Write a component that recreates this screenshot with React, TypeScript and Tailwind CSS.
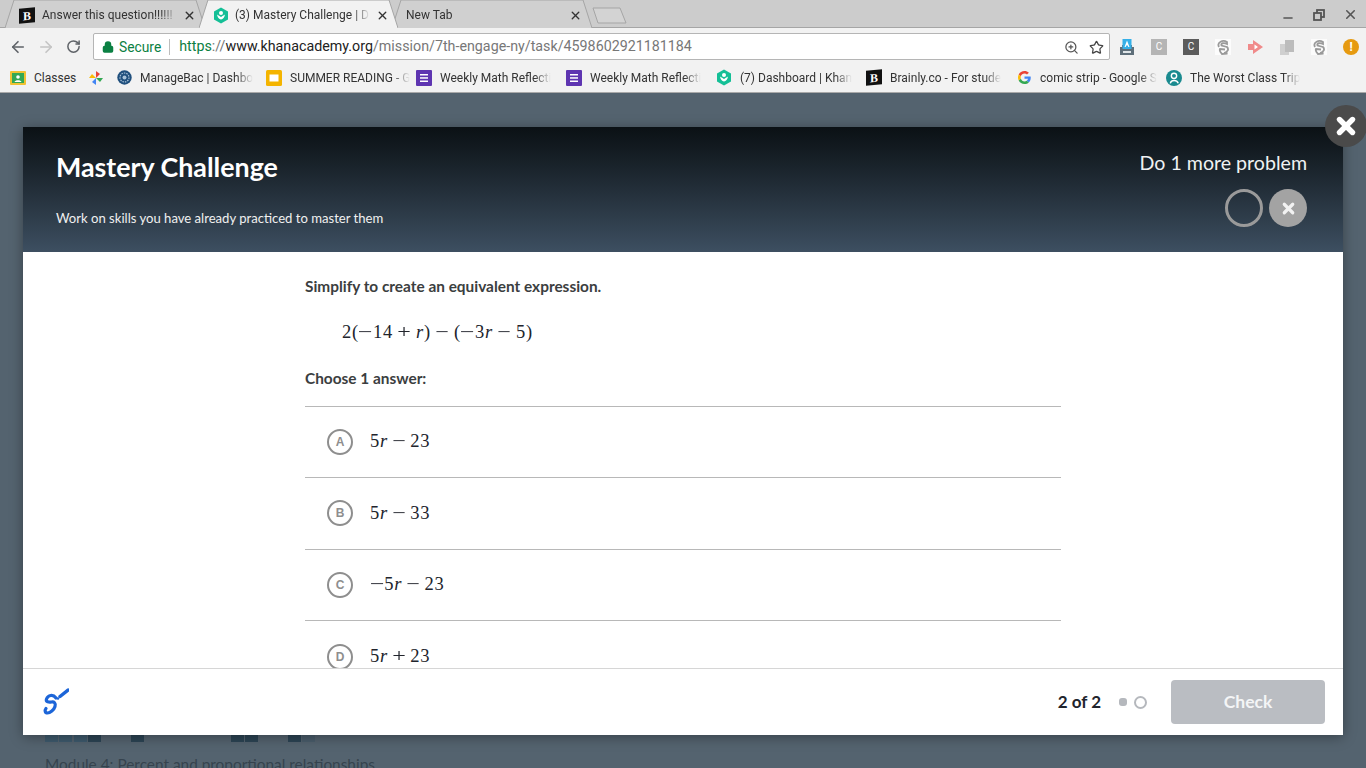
import React from "react";
import { ArrowLeft, ArrowRight, RotateCw, Lock, ZoomIn, Star, X, Minus } from "lucide-react";

const BrainlyIcon = () => (
  <div className="w-[16px] h-[15px] bg-[#111] flex items-center justify-center text-white text-[12px] font-bold leading-none [font-family:'Liberation_Serif',serif] shrink-0 -skew-y-6">B</div>
);

const KhanIcon = () => (
  <svg width="16" height="17" viewBox="0 0 16 17" className="shrink-0">
    <path d="M8 0.5 L15 4.5 V12.5 L8 16.5 L1 12.5 V4.5 Z" fill="#14bf96" />
    <circle cx="8" cy="6" r="2" fill="#fff" />
    <path d="M4 7.5 C4.5 10.5 6 12 8 12.5 C10 12 11.5 10.5 12 7.5 C10.5 8.5 9 9.2 8 10 C7 9.2 5.5 8.500 4 7.5Z" fill="#fff" />
  </svg>
);

const FormsIcon = () => (
  <svg width="16" height="16" viewBox="0 0 16 16" className="shrink-0">
    <rect width="16" height="16" rx="1" fill="#5e35b1" />
    <rect x="4" y="4" width="8" height="1.500" fill="#fff" />
    <rect x="4" y="7.200" width="8" height="1.500" fill="#fff" />
    <rect x="4" y="10.500" width="8" height="1.500" fill="#fff" />
  </svg>
);

const ClassroomIcon = () => (
  <svg width="16" height="14" viewBox="0 0 16 14" className="shrink-0">
    <rect width="16" height="14" rx="1" fill="#f1c232" />
    <rect x="2" y="2" width="12" height="10" fill="#34a853" />
    <circle cx="8" cy="6" r="1.800" fill="#fff" />
    <path d="M4.500 11 C5 8.500 11 8.500 11.500 11Z" fill="#fff" />
  </svg>
);

const PinwheelIcon = () => (
  <svg width="16" height="16" viewBox="0 0 16 16" className="shrink-0">
    <path d="M8 8 L8 1 L12 4Z" fill="#ea4335" />
    <path d="M8 8 L15 8 L12 12Z" fill="#34a853" />
    <path d="M8 8 L8 15 L4 12Z" fill="#4285f4" />
    <path d="M8 8 L1 8 L4 4Z" fill="#fbbc05" />
  </svg>
);

const GlobeIcon = () => (
  <svg width="15" height="15" viewBox="0 0 15 15" className="shrink-0">
    <circle cx="7.500" cy="7.500" r="7.200" fill="#1f4f7d" />
    <circle cx="7.500" cy="7.500" r="4.500" fill="none" stroke="#a9c3d9" strokeWidth="1.200" strokeDasharray="1.500 1" />
    <circle cx="7.500" cy="7.500" r="2" fill="#a9c3d9" />
  </svg>
);

const SlidesIcon = () => (
  <svg width="16" height="16" viewBox="0 0 16 16" className="shrink-0">
    <rect width="16" height="16" rx="1.500" fill="#f4b400" />
    <rect x="3.500" y="4.500" width="9" height="7" fill="#fff" />
  </svg>
);

const GoogleIcon = () => (
  <svg width="13" height="13" viewBox="0 0 48 48" className="shrink-0">
    <path fill="#ea4335" d="M24 9.500c3.500 0 6.700 1.200 9.200 3.600l6.900-6.900C35.900 2.400 30.500 0 24 0 14.600 0 6.500 5.400 2.600 13.200l8 6.200C12.500 13.600 17.800 9.500 24 9.500z" />
    <path fill="#4285f4" d="M47 24.500c0-1.600-.2-3.100-.4-4.500H24v9h13c-.6 3-2.200 5.500-4.800 7.200l7.700 6C44.400 38 47 31.800 47 24.500z" />
    <path fill="#fbbc05" d="M10.600 28.600c-.5-1.500-.8-3-.8-4.600s.3-3.100.8-4.600l-8-6.200C.9 16.500 0 20.100 0 24s.9 7.500 2.600 10.800l8-6.200z" />
    <path fill="#34a853" d="M24 48c6.500 0 11.900-2.100 15.900-5.800l-7.700-6c-2.200 1.400-4.900 2.300-8.200 2.300-6.200 0-11.500-4.100-13.400-9.900l-8 6.200C6.500 42.600 14.600 48 24 48z" />
  </svg>
);

const TripIcon = () => (
  <svg width="16" height="16" viewBox="0 0 15 15" className="shrink-0">
    <circle cx="7.500" cy="7.500" r="7.500" fill="#1a8a8f" />
    <circle cx="7.500" cy="5.500" r="2.500" fill="none" stroke="#fff" strokeWidth="1.300" />
    <path d="M4 12.500 C5 9 10 9 11.500 12.500" fill="none" stroke="#fff" strokeWidth="1.300" />
  </svg>
);

const Tab = ({ icon, title, active, width, right }: { icon?: React.ReactNode; title: string; active?: boolean; width: string; right: string }) => (
  <div className={`relative h-[28px] -mb-px flex items-center pt-[2px] pl-[14px] -mr-[6px] ${width} ${right} ${active ? "z-10" : ""}`}>
    <svg className="absolute inset-0 w-full h-full" viewBox="0 0 100 28" preserveAspectRatio="none">
      <path d="M0 28 L4.500 0 H95.500 L100 28 Z" fill={active ? "#f2f2f2" : "#d0d0d0"} />
      <path d="M0 28 L4.500 0 H95.500 L100 28" fill="none" stroke="#a5a5a5" strokeWidth="1" vectorEffect="non-scaling-stroke" />
    </svg>
    {icon && <div className="relative mr-[6px] flex">{icon}</div>}
    <div className="relative flex-1 min-w-0">
      <span className="block text-[12px] text-[#333] whitespace-nowrap [mask-image:linear-gradient(to_right,black_88%,transparent)]">{title}</span>
    </div>
    <X className="relative ml-[6px] shrink-0 text-[#333]" size={13} strokeWidth={2.5} />
  </div>
);

const Bookmark = ({ icon, label, fade }: { icon: React.ReactNode; label: string; fade?: boolean }) => (
  <div className="w-[150px] flex items-center shrink-0">
    <div className="w-[16px] flex justify-center">{icon}</div>
    <span className={`ml-[8px] text-[12px] text-[#333] whitespace-nowrap ${fade === false ? "" : "[mask-image:linear-gradient(to_right,black_85%,transparent)]"}`}>{label}</span>
  </div>
);

const ExtBox = ({ bg, text }: { bg: string; text: string }) => (
  <div className={`w-[16px] h-[16px] ${bg} flex items-center justify-center text-[10px] text-white`}>{text}</div>
);

const ExtGhost = () => (
  <svg width="16" height="16" viewBox="0 0 16 16">
    <rect width="16" height="16" fill="#fcfcfc" />
    <path d="M4 8 C1.500 3 8 0.500 12 3 L12 5 C9 3.500 5.500 4 6.500 6.500 L12 8 C14 10 13 13 9 14 L12.500 14.500 L7 15 C5 13 4 12 5 10 L10 10.500" fill="none" stroke="#9a9a9a" strokeWidth="1.800" />
  </svg>
);

const Math_ = ({ children, wide }: { children: React.ReactNode; wide?: boolean }) => (
  <span className={`[font-family:'Liberation_Serif',serif] text-[18.5px] text-[#21242c] ${wide ? "tracking-[0.7px]" : "tracking-[0.8px]"}`}>{children}</span>
);

const V = () => <i>r</i>;
const Op = ({ c, wide }: { c: string; wide?: boolean }) => (
  <span className={`inline-block scale-x-[1.3] ${wide ? "mx-[6px]" : "mx-[5.500px]"}`}>{c}</span>
);
const Neg = () => <span className="inline-block scale-x-[1.4] mx-[1.500px]">−</span>;

const Choice = ({ letter, children, last }: { letter: string; children: React.ReactNode; last?: boolean }) => (
  <div className={`h-[71.300px] shrink-0 flex items-center pl-[22px] ${last ? "" : "border-b border-[#b8b8b8]"}`}>
    <div className="w-[26px] h-[26px] rounded-full border-2 border-[#8e8e8e] flex items-center justify-center text-[12px] font-bold text-[#8e8e8e] [font-family:'Liberation_Sans',sans-serif]">{letter}</div>
    <div className="ml-[17px]">{children}</div>
  </div>
);

const cells = [
  "bg-[#3e5a6d]", "bg-[#3e5a6d]", "bg-[#3e5a6d]", "bg-[#2c4454]", "", "", "bg-[#2c4454]", "", "", "", "", "", "", "bg-[#2c4454]", "bg-[#2c4454]", "", "", "bg-[#2c4454]", "bg-[#4a5d6b]",
];

export default function App() {
  return (
    <div className="relative w-[1366px] h-[768px] overflow-hidden flex flex-col bg-[#54636f] [font-family:Roboto,sans-serif]">
      {/* tab strip */}
      <div className="h-[28px] bg-[#cccccc] flex items-end pl-[5px] relative shrink-0 border-b border-[#a5a5a5]">
        <Tab icon={<div className="mr-px"><BrainlyIcon /></div>} title="Answer this question!!!!!!" width="w-[200px]" right="pr-[9px]" />
        <Tab icon={<KhanIcon />} title="(3) Mastery Challenge | D" active width="w-[199px]" right="pr-[9px]" />
        <Tab title="New Tab" width="w-[200px]" right="pr-[10px]" />
        <svg width="36" height="17" viewBox="0 0 36 17" className="ml-[6px] mb-[3px]">
          <path d="M1 1 H28 L34 16 H6 Z" fill="#d3d3d3" stroke="#a5a5a5" />
        </svg>
        <div className="ml-auto flex items-center gap-[18px] pt-[3px] pr-[8px] h-[28px] text-[#555]">
          <Minus size={14} strokeWidth={2.5} className="mt-[6px]" />
          <svg width="12" height="12" viewBox="0 0 12 12" fill="none" stroke="#555" strokeWidth="1.800">
            <rect x="4" y="1" width="7" height="7" />
            <rect x="1" y="4" width="7" height="7" fill="#ccc" />
          </svg>
          <X size={15} strokeWidth={2.5} />
        </div>
      </div>

      {/* toolbar */}
      <div className="h-[37px] bg-[#f2f2f2] flex items-center shrink-0 pl-[9px]">
        <ArrowLeft size={18} strokeWidth={2.2} className="text-[#5f6368]" />
        <ArrowRight size={18} strokeWidth={2.2} className="ml-[10px] text-[#c4c4c4]" />
        <RotateCw size={15} strokeWidth={2.4} className="ml-[11px] text-[#5f6368]" />
        <div className="ml-[12px] w-[1017px] h-[27px] bg-white border border-[#b5b5b5] rounded-[2px] flex items-center pl-[8px] pr-[5px] pt-px text-[14px] whitespace-nowrap">
          <Lock size={12} strokeWidth={3} fill="currentColor" className="text-[#0b8043]" />
          <span className="ml-[5px] text-[#0b8043] text-[13.800px]">Secure</span>
          <span className="ml-[8px] mr-[9px] w-px h-[16px] bg-[#bdbdbd]" />
          <span className="text-[14.280px]">
            <span className="text-[#0b8043]">https</span>
            <span className="text-[#777]">://</span>
            <span className="text-[#222]">www.khanacademy.org</span>
            <span className="text-[#777]">/mission/7th-engage-ny/task/4598602921181184</span>
          </span>
          <ZoomIn size={15} strokeWidth={2} className="ml-auto text-[#555]" />
          <Star size={15} strokeWidth={2} className="ml-[10px] text-[#444]" />
        </div>
        <div className="ml-[9px] flex items-center gap-[16px]">
          <svg width="16" height="16" viewBox="0 0 16 16">
            <path d="M1 16 V8 H3 V6 H13 V8 H15 V16 Z" fill="#5f6f7a" />
            <rect x="3.500" y="0" width="9" height="10" fill="#35b0e8" />
            <path d="M8 1.500 L10.500 8 H9.300 L8.800 6.500 H7.200 L6.700 8 H5.500 Z" fill="#fff" />
            <rect x="4" y="12" width="8" height="2" fill="#dfe5e8" />
          </svg>
          <ExtBox bg="bg-[#b5b5b5]" text="C" />
          <ExtBox bg="bg-[#5c5c5c]" text="C" />
          <ExtGhost />
          <svg width="16" height="16" viewBox="0 0 16 16">
            <path d="M6 1 L16 8 L6 15 V11 H1 V5 H6 Z" fill="#f08a8a" />
            <path d="M7.500 5.500 L11 8 L7.500 10.500 Z" fill="#fff" />
          </svg>
          <svg width="16" height="16" viewBox="0 0 16 16">
            <rect x="1" y="5" width="9" height="11" fill="#cfcfcf" />
            <rect x="6" y="1" width="9" height="12" fill="#bcbcbc" />
          </svg>
          <ExtGhost />
          <div className="w-[16px] h-[16px] rounded-full bg-[#e69a10] flex items-center justify-center text-white text-[12px] font-bold">!</div>
        </div>
      </div>

      {/* bookmarks */}
      <div className="h-[28px] pb-[2px] bg-[#f2f2f2] border-b border-[#a9a9a9] flex items-center pl-[10px] shrink-0">
        <Bookmark icon={<ClassroomIcon />} label="Classes" fade={false} />
        <div className="-ml-[72px] mr-[12px]"><PinwheelIcon /></div>
        <Bookmark icon={<GlobeIcon />} label="ManageBac | Dashbo" />
        <Bookmark icon={<SlidesIcon />} label="SUMMER READING - G" />
        <Bookmark icon={<FormsIcon />} label="Weekly Math Reflecti" />
        <Bookmark icon={<FormsIcon />} label="Weekly Math Reflecti" />
        <Bookmark icon={<KhanIcon />} label="(7) Dashboard | Khan" />
        <Bookmark icon={<BrainlyIcon />} label="Brainly.co - For stude" />
        <Bookmark icon={<GoogleIcon />} label="comic strip - Google S" />
        <Bookmark icon={<TripIcon />} label="The Worst Class Trip" />
      </div>

      {/* page behind the modal */}
      <div className="flex-1 pl-[45px] pt-[635px] [font-family:Lato,sans-serif]">
        <div className="flex h-[14px]">
          {cells.map((c, i) => (
            <div key={i} className={`w-[13px] mr-[1.300px] h-full ${c}`} />
          ))}
        </div>
        <div className="mt-[11px] text-[15.400px] text-[#36434e] whitespace-nowrap">Module 4: Percent and proportional relationships</div>
      </div>

      {/* modal */}
      <div className="absolute left-[23px] top-[127px] w-[1320px] h-[608px] bg-white flex flex-col shadow-[0_2px_12px_rgba(0,0,0,0.35)] [font-family:Lato,sans-serif]">
        <div className="h-[125px] shrink-0 bg-gradient-to-b from-[#0b1115] to-[#3d4f61] flex justify-between pl-[33px] pr-[36px] text-white">
          <div>
            <div className="mt-[23px] text-[26.800px] leading-[34px] font-bold">Mastery Challenge</div>
            <div className="mt-[25px] text-[13.100px] leading-[18px] text-[#f0f0f0]">Work on skills you have already practiced to master them</div>
          </div>
          <div className="flex flex-col items-end">
            <div className="mt-[24px] text-[19.600px] leading-[24px] text-[#f0f2f3]">Do 1 more problem</div>
            <div className="mt-[14px] flex gap-[6px]">
              <div className="w-[38px] h-[38px] rounded-full border-[3px] border-[#9a9a9a]" />
              <div className="w-[38px] h-[38px] rounded-full bg-[#a3a3a3] flex items-center justify-center">
                <X size={17} strokeWidth={4.5} className="text-[#f2f2f2]" />
              </div>
            </div>
          </div>
        </div>

        <div className="flex-1 overflow-hidden pl-[282px] w-[1038px] flex flex-col">
          <div className="mt-[24px] text-[15.400px] leading-[20px] font-bold text-[#3b3e40]">Simplify to create an equivalent expression.</div>
          <div className="mt-[24px] ml-[37px] leading-[24px] whitespace-nowrap">
            <Math_ wide>2(<Neg />14<Op wide c="+" /><V />)<Op wide c="−" />(<Neg />3<V /><Op wide c="−" />5)</Math_>
          </div>
          <div className="mt-[24px] text-[15.400px] leading-[20px] font-bold text-[#3b3e40]">Choose 1 answer:</div>
          <div className="mt-[18px] border-t border-[#b8b8b8] flex flex-col">
            <Choice letter="A"><Math_>5<V /><Op c="−" />23</Math_></Choice>
            <Choice letter="B"><Math_>5<V /><Op c="−" />33</Math_></Choice>
            <Choice letter="C"><Math_><Neg />5<V /><Op c="−" />23</Math_></Choice>
            <Choice letter="D" last><Math_>5<V /><Op c="+" />23</Math_></Choice>
          </div>
        </div>

        <div className="h-[67px] shrink-0 border-t border-[#d6d6d6] flex items-center pl-[20px] pr-[18px]">
          <svg width="26" height="28" viewBox="0 0 26 28" fill="none">
            <path d="M25 2 L17 8.500" stroke="#1c65d8" strokeWidth="3.400" strokeLinecap="round" />
            <circle cx="15" cy="10.500" r="1.300" fill="#1c65d8" />
            <path d="M13 10 C10 6 5 7 3.500 11 C2.500 14 6 14.500 8.500 14 C11 13.500 13 15 12 18.500 C11 22 7 25 4.500 25 C2 25 1.500 22.500 3 20.500" stroke="#1c65d8" strokeWidth="3.200" strokeLinecap="round" />
          </svg>
          <div className="ml-auto mr-px text-[17px] font-bold text-[#21242c]">2 of 2</div>
          <div className="ml-[17px] w-[8px] h-[8px] rounded-[3px] bg-[#b5b8bd]" />
          <div className="ml-[7px] w-[13px] h-[13px] rounded-full border-2 border-[#b5b8bd]" />
          <div className="ml-[24px] w-[154px] h-[44px] rounded-[4px] bg-[#babdc2] flex items-center justify-center text-[17.500px] font-bold text-[#f4f5f6]">Check</div>
        </div>
      </div>

      {/* close button over the modal corner */}
      <div className="absolute left-[1325px] top-[105px] w-[42px] h-[42px] rounded-full bg-[#4a4a4a] flex items-center justify-center">
        <X size={26} strokeWidth={5} className="text-white" />
      </div>
    </div>
  );
}
